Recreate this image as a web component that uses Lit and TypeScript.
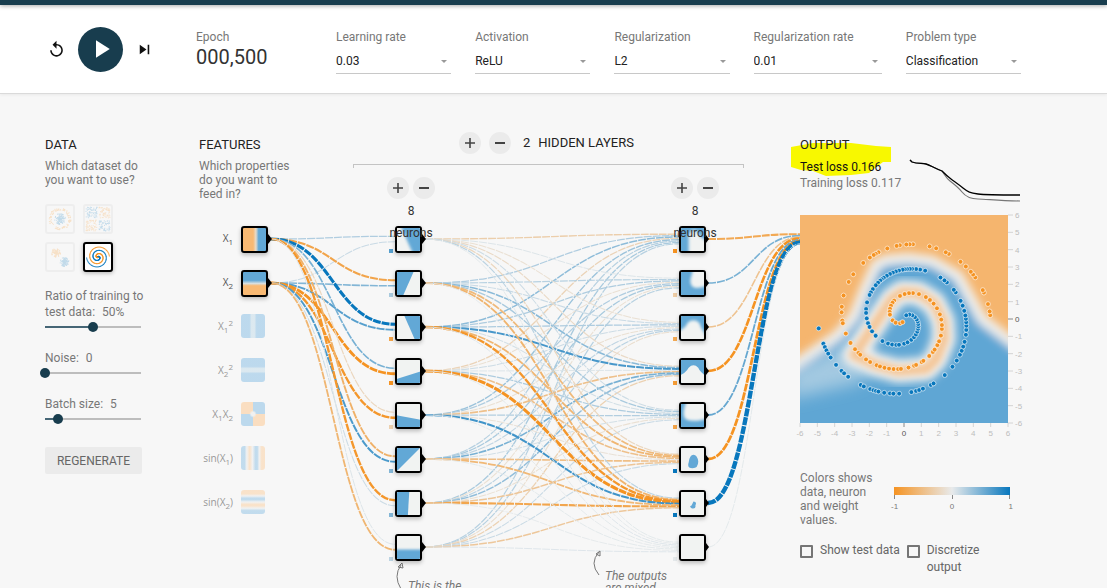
import { LitElement, html, svg, css } from "lit";
import { customElement, state } from "lit/decorators.js";
import { classMap } from "lit/directives/class-map.js";
import { styleMap } from "lit/directives/style-map.js";

const ORANGE = [245, 147, 34];
const NEUTRAL = [232, 234, 235];
const BLUE = [8, 119, 189];

function weightColor(w: number): string {
  const end = w < 0 ? ORANGE : BLUE;
  const k = Math.min(1, Math.abs(w));
  return `rgb(${NEUTRAL.map((n, i) => Math.round(n + (end[i] - n) * k)).join(",")})`;
}

/* Weights are listed per target neuron, one entry for each source. */
const INPUT_WEIGHTS = [
  [0.25, 0.14], [-0.8, 0.45], [1.4, 0.65], [0.5, -1.2],
  [-0.22, -0.95], [-0.65, 0.7], [-0.95, 0.12], [0.06, -0.6],
];
const HIDDEN_WEIGHTS = [
  [-0.32, 0.25, 0.4, -0.26, 0.34, 0.22, 0.28, 0.22],
  [0.06, 0.22, 0.26, -0.12, 0.25, 0.28, -0.12, 0.22],
  [-0.12, 0.14, 0.26, 0.12, -0.12, 0.18, 0.2, -0.14],
  [-0.18, 0.42, 0.72, 0.06, -0.48, 0.5, 0.38, -0.28],
  [0.12, 0.28, 0.1, 0.26, 0.24, 0.1, -0.12, 0.14],
  [-0.22, -0.55, -0.6, -0.48, -0.1, -0.5, -0.42, 0.14],
  [0.2, -0.62, -0.95, -1.4, 0.75, -0.58, -0.78, -0.4],
  [0.03, 0.02, 0.05, 0.03, 0.02, 0.03, 0.02, 0.05],
];
const OUTPUT_WEIGHTS = [[-0.75, 0.5, -0.45, -1.1, 0.58, -1.2, 2.2, 0.03]];
const BIASES = [
  [0.65, 0.28, -0.8, -1, -0.3, 0.45, 0.45, 0.2],
  [-1, -0.35, -0.75, -0.9, -0.8, 1, 1, 0.02],
];

const ROW = 44;
const NODE = 27;
const TOP = 89;
const rowY = (i: number) => TOP + 13 + i * ROW;

const LIGHT = "#f1f3f2";
const FILL = "#62a8d6";

type Texture = { bg: string; fg: string; d: string; blur: number };
const onLight = (d: string, blur = 0.5): Texture => ({ bg: LIGHT, fg: FILL, d, blur });
const onBlue = (d: string, blur = 1): Texture => ({ bg: FILL, fg: LIGHT, d, blur });

const TEXTURES: Texture[][] = [
  [
    onLight("M3-4H30V30H18Z", 1.8),
    onLight("M-4-4H19L4 30H-4Z"),
    onLight("M6-4H30V30H21Z", 0.8),
    onLight("M-4 21L28 11V30H-4Z"),
    onLight("M-4 11L28 17V30H-4Z"),
    onLight("M-4-4H28L-4 28Z"),
    onLight("M-4-4H13L11 30H-4Z"),
    onLight("M-4 14H30V30H-4Z", 1.2),
  ],
  [
    onBlue("M8 30L8 7Q12 0 16 3L21 10L30 15V30Z", 1.4),
    onBlue("M13-4H30V13Q20 18 13 16Q9 13 10 7Z", 1.6),
    onBlue("M-4 16Q4 14 7 7Q13 2 19 7Q21 13 24 17L30 30H-4Z", 1.5),
    onBlue("M-4 17Q5 14 8 8Q13 3 18 8Q20 13 28 18V30H-4Z", 0.7),
    onBlue("M6-4Q0 12 5 16Q15 20 30 14V-4Z", 1.6),
    onLight("M13 7Q17 7 18 14Q18 21 12 21Q6 21 8 15Q9 7 13 7Z", 0.8),
    onLight("M13 10Q17 10 15 14Q16 18 11 17Q8 15 11 14Z", 0.6),
    onLight(""),
  ],
];

const FEATURES = [
  { label: html`X<sub>1</sub>`, art: "f-x1", on: true },
  { label: html`X<sub>2</sub>`, art: "f-x2", on: true },
  { label: html`X<sub>1</sub><sup>2</sup>`, art: "f-x1sq", on: false },
  { label: html`X<sub>2</sub><sup>2</sup>`, art: "f-x2sq", on: false },
  { label: html`X<sub>1</sub>X<sub>2</sub>`, art: "f-x1x2", on: false },
  { label: html`sin(X<sub>1</sub>)`, art: "f-sinx1", on: false },
  { label: html`sin(X<sub>2</sub>)`, art: "f-sinx2", on: false },
];

@customElement("neural-network")
export class NeuralNetwork extends LitElement {
  @state() width = 601;
  private observer?: ResizeObserver;

  static styles = css`
    :host { display: block; position: relative; min-height: 460px; }
    .head { display: flex; }
    .features { width: 154px; }
    h2 { margin: 0; font-size: 13px; line-height: 16px; font-weight: 400; color: #222; }
    p { margin: 6px 56px 0 0; font-size: 12px; line-height: 14px; color: #777; }
    .layers { flex: 1; margin-right: 56px; }
    .title { display: flex; align-items: center; justify-content: center; gap: 8px; height: 22px; margin-top: -5px; padding-right: 4px; }
    .title .count { padding-left: 4px; font-size: 13px; color: #222; }
    .bracket { height: 3px; margin-top: 10px; border: 1px solid #c4c4c4; border-bottom: 0; }
    button.round { width: 22px; height: 22px; padding: 0; border: 0; border-radius: 50%; background: #ebebeb; display: grid; place-items: center; }
    .round svg { width: 12px; height: 12px; }
    .links { position: absolute; left: 0; top: 0; width: 100%; height: 100%; overflow: hidden; pointer-events: none; }
    .node { position: absolute; box-sizing: border-box; width: 27px; height: 27px; border: 2px solid #000; border-radius: 3px; overflow: hidden; box-shadow: 0 2px 4px rgba(0, 0, 0, 0.25); }
    .node svg { display: block; width: 100%; height: 100%; }
    .off { width: 24px; height: 24px; border: 0; opacity: 0.42; box-shadow: none; }
    .label { position: absolute; width: 60px; left: -26px; height: 16px; text-align: right; font: 10px/16px "Open Sans", sans-serif; color: #555; }
    .label.dim { color: #999; }
    .label sub, .label sup { font-size: 8px; line-height: 0; }
    .f-x1 { background: linear-gradient(90deg, #f8b973 44%, #e8dccb 56%, #62a8d6 68%); }
    .f-x2 { background: linear-gradient(#62a8d6 36%, #d7dfe0 50%, #f8b973 60%); }
    .f-x1sq { background: linear-gradient(90deg, #6cb0e0 35%, #b6d5e6 44%, #b6d5e6 56%, #6cb0e0 65%); }
    .f-x2sq { background: linear-gradient(#6cb0e0 35%, #b6d5e6 44%, #b6d5e6 56%, #6cb0e0 65%); }
    .f-x1x2 { background: radial-gradient(circle, #e8eaeb 10%, transparent 22%), conic-gradient(#6cb0e0 25%, #ffbe78 0 50%, #6cb0e0 0 75%, #ffbe78 0); }
    .f-sinx1 { background: linear-gradient(90deg, #78b6e0 15%, #e8eaeb 24%, #fcc68c 36%, #e8eaeb 48%, #78b6e0 60% 68%, #e8eaeb 76%, #fcc68c 86%); }
    .f-sinx2 { background: linear-gradient(#fcc68c 16%, #e8eaeb 25%, #78b6e0 34% 40%, #e8eaeb 50%, #fcc68c 60% 66%, #e8eaeb 76%, #78b6e0 86%); }
    .neurons { position: absolute; top: 40px; width: 52px; text-align: center; font-size: 12px; line-height: 22px; color: #333; }
    .pair { display: flex; justify-content: center; gap: 4px; margin-bottom: 1px; }
    .callout { position: absolute; width: 72px; font-size: 12px; line-height: 12px; font-style: italic; color: #777; }
  `;

  connectedCallback() {
    super.connectedCallback();
    this.observer = new ResizeObserver((entries) => {
      this.width = Math.round(entries[0].contentRect.width);
    });
    this.observer.observe(this);
  }

  disconnectedCallback() {
    this.observer?.disconnect();
    super.disconnectedCallback();
  }

  private links(weights: number[][], from: number, to: number) {
    return weights.map((sources, t) =>
      sources.map((w, s) => {
        const y0 = rowY(s);
        const y1 = rowY(t) + ((s - (sources.length - 1) / 2) / sources.length) * 11;
        const mid = (from + to) / 2;
        return svg`<path d="M${from} ${y0}C${mid} ${y0} ${mid} ${y1} ${to} ${y1}" fill="none"
          stroke=${weightColor(w)} stroke-width=${0.85 + Math.abs(w) * 1.6} stroke-dasharray="8 1"></path>`;
      }),
    );
  }

  private round(kind: "plus" | "minus", label: string) {
    return html`<button class="round" aria-label=${label}>
      <svg viewBox="0 0 12 12"><path d=${kind === "plus" ? "M1 6H11M6 1V11" : "M1 6H11"} stroke="#444" stroke-width=${kind === "plus" ? 1.6 : 2} fill="none"></path></svg>
    </button>`;
  }

  private node(t: Texture, left: number, row: number) {
    return html`<div class="node" style=${styleMap({ left: `${left}px`, top: `${TOP + row * ROW}px` })}>
      <svg viewBox="0 0 24 24">
        <rect width="24" height="24" fill=${t.bg}></rect>
        <path d=${t.d} fill=${t.fg} style=${styleMap({ filter: `blur(${t.blur}px)` })}></path>
      </svg>
    </div>`;
  }

  private arrow(x: number, row: number, size = 5) {
    const y = rowY(row);
    return svg`<path d="M${x} ${y - size}L${x + size - 1} ${y}L${x} ${y + size}Z" fill="#000"></path>`;
  }

  render() {
    const w = this.width;
    const featureX = 42;
    const secondX = w - 121;
    const firstX = Math.round(featureX + (secondX - featureX) * 0.352);
    const columns = [firstX, secondX];
    return html`
      <div class="head">
        <div class="features">
          <h2>FEATURES</h2>
          <p>Which properties do you want to feed in?</p>
        </div>
        <div class="layers">
          <div class="title">
            ${this.round("plus", "Add layer")}${this.round("minus", "Remove layer")}
            <span class="count">2</span>
            <h2>HIDDEN LAYERS</h2>
          </div>
          <div class="bracket"></div>
        </div>
      </div>

      <svg class="links">
        ${this.links(INPUT_WEIGHTS, featureX + NODE + 3, firstX)}
        ${this.links(HIDDEN_WEIGHTS, firstX + NODE + 3, secondX)}
        ${this.links(OUTPUT_WEIGHTS, secondX + NODE + 2, w)}
        ${[0, 1].map((r) => this.arrow(featureX + NODE, r))}
        ${columns.map((x, c) => BIASES[c].map((b, r) => svg`
          ${this.arrow(x + NODE, r, c ? 4 : 5)}
          <rect x=${x - 6} y=${TOP + 23 + r * ROW} width="4" height="4" fill=${weightColor(b)}></rect>`))}
        <path d=${`M${firstX + 6} 452Q${firstX - 2} 439 ${firstX + 6} 428M${firstX + 3} 430L${firstX + 7} 426L${firstX + 8} 431Z`} fill="none" stroke="#777"></path>
        <path d=${`M${secondX - 80} 438Q${secondX - 90} 426 ${secondX - 80} 415M${secondX - 83} 417L${secondX - 79} 414L${secondX - 79} 419Z`} fill="none" stroke="#777"></path>
      </svg>

      ${FEATURES.map((f, r) => html`
        <div class=${classMap({ label: true, dim: !f.on })} style=${styleMap({ top: `${TOP + 4 + r * ROW}px` })}>${f.label}</div>
        <div class=${classMap({ node: true, off: !f.on, [f.art]: true })} style=${styleMap({ left: `${featureX}px`, top: `${TOP + r * ROW}px` })}></div>
      `)}
      ${columns.map((x, c) => html`
        ${TEXTURES[c].map((t, r) => this.node(t, x, r))}
        <div class="neurons" style=${styleMap({ left: `${x - 10}px` })}>
          <div class="pair">${this.round("plus", "Add neuron")}${this.round("minus", "Remove neuron")}</div>
          8<br />neurons
        </div>
      `)}
      <div class="callout" style=${styleMap({ left: `${firstX + 13}px`, top: "443px" })}>This is the</div>
      <div class="callout" style=${styleMap({ left: `${secondX - 74}px`, top: "433px" })}>The outputs are mixed</div>
    `;
  }
}

const BLUE_POINTS = [
  0.99, 0.973, 0.969, 0.965, 0.961, 0.956, 0.946, 0.937, 0.933, 0.927, 0.91, 0.906, 0.898, 0.894, 0.891, 0.888, 0.881,
  0.874, 0.87, 0.863, 0.848, 0.842, 0.838, 0.833, 0.822, 0.818, 0.8, 0.785, 0.775, 0.766, 0.76, 0.754, 0.747, 0.737,
  0.73, 0.724, 0.719, 0.714, 0.709, 0.702, 0.694, 0.686, 0.671, 0.666, 0.65, 0.645, 0.637, 0.609, 0.6, 0.593, 0.586,
  0.582, 0.577, 0.573, 0.569, 0.562, 0.556, 0.55, 0.544, 0.537, 0.53, 0.525, 0.521, 0.515, 0.508, 0.498, 0.49, 0.484,
  0.467, 0.452, 0.443, 0.43, 0.418, 0.408, 0.395, 0.38, 0.356, 0.338, 0.325, 0.312, 0.303, 0.285, 0.272, 0.255, 0.24,
  0.226, 0.212, 0.198, 0.186, 0.174, 0.16, 0.146, 0.128, 0.105, 0.08, 0.05,
];
const ORANGE_POINTS = [
  0.996, 0.992, 0.984, 0.971, 0.968, 0.952, 0.948, 0.944, 0.936, 0.928, 0.912, 0.908, 0.896, 0.888, 0.868, 0.864, 0.86,
  0.852, 0.848, 0.836, 0.824, 0.82, 0.817, 0.811, 0.8, 0.78, 0.768, 0.748, 0.732, 0.724, 0.712, 0.708, 0.692, 0.676,
  0.664, 0.656, 0.652, 0.64, 0.632, 0.62, 0.614, 0.606, 0.598, 0.59, 0.582, 0.577, 0.563, 0.552, 0.548, 0.536, 0.532,
  0.517, 0.506, 0.5, 0.489, 0.48, 0.467, 0.452, 0.443, 0.43, 0.417, 0.4, 0.385, 0.371, 0.357, 0.335, 0.316, 0.303,
  0.288, 0.27, 0.241, 0.23, 0.215, 0.2, 0.185, 0.17, 0.132, 0.105, 0.067, 0.04,
];

function spiral(f: number, phase: number, scale: number, center: number) {
  const r = f * 5 * scale;
  const t = f * 1.75 * 2 * Math.PI + phase;
  return { x: center + r * Math.sin(t), y: center - r * Math.cos(t) };
}

@customElement("output-heatmap")
export class OutputHeatmap extends LitElement {
  static styles = css`
    :host { display: block; }
    svg { display: block; width: 100%; overflow: visible; }
    text { font: 8px "Liberation Sans", Arial, sans-serif; fill: #bdbdbd; }
    .zero { fill: #555; }
  `;

  private dots(points: number[], phase: number, color: string) {
    return points.map((f) => {
      const p = spiral(f, phase, 208 / 12, 104);
      return svg`<circle cx=${p.x} cy=${p.y} r="2.4" fill=${color} stroke="#fff" stroke-opacity="0.6"></circle>`;
    });
  }

  render() {
    const ticks = Array.from({ length: 13 }, (_, i) => i - 6);
    const at = (v: number) => 104 + (v * 208) / 12;
    const region = "M-20 161L14 137L38 120L54 101L65 74L76 50L86 45L108 43L132 46L158 61L172 86L182 104L230 141V230H-20Z";
    const ring = "M54 140L92 84L102 77L118 78L134 88L143 106L144 124L136 144L126 154L98 156L76 150Z";
    return html`<svg viewBox="0 0 220 222" role="img" aria-label="Network output">
      <defs>
        <clipPath id="plot"><rect width="208" height="208"></rect></clipPath>
        <filter id="b4" x="-20%" y="-20%" width="140%" height="140%"><feGaussianBlur stdDeviation="4"></feGaussianBlur></filter>
        <filter id="b3" x="-20%" y="-20%" width="140%" height="140%"><feGaussianBlur stdDeviation="3"></feGaussianBlur></filter>
        <filter id="b8" x="-50%" y="-50%" width="200%" height="200%"><feGaussianBlur stdDeviation="8"></feGaussianBlur></filter>
      </defs>
      <g clip-path="url(#plot)">
        <rect width="208" height="208" fill="#f5b56e"></rect>
        <g filter="url(#b4)">
          <path d=${region} fill="#5fa6d4" stroke="#eeeeec" stroke-width="11"></path>
        </g>
        <path d="M-10 156L44 130L72 156L58 168L-10 184Z" fill="#d2e1ea" opacity="0.6" filter="url(#b8)"></path>
        <path d=${ring} fill="none" stroke="#f0efed" stroke-width="24" stroke-linejoin="round" filter="url(#b4)"></path>
        <path d=${ring} fill="none" stroke="#f4c697" stroke-width="10" stroke-linejoin="round" filter="url(#b3)"></path>
        ${this.dots(ORANGE_POINTS, Math.PI, "#f59322")}
        ${this.dots(BLUE_POINTS, 0, "#0877bd")}
      </g>
      ${ticks.map((v) => svg`
        <path d=${`M208 ${at(-v)}H213M${at(v)} 208V212`} stroke=${v ? "#d4d4d4" : "#888"}></path>
        <text class=${v ? "" : "zero"} x="215" y=${at(-v) + 3}>${v}</text>
        <text class=${v ? "" : "zero"} x=${at(v)} y="221" text-anchor="middle">${v}</text>`)}
    </svg>`;
  }
}

/* Small repeatable generator so that the dataset thumbnails stay stable. */
function random(seed: number) {
  let s = seed;
  return () => {
    s = (s * 16807) % 2147483647;
    return s / 2147483647;
  };
}

type Dot = { x: number; y: number; blue: boolean };
function dataset(kind: string): Dot[] {
  const rnd = random(41);
  const dots: Dot[] = [];
  const polar = (r: number, cx: number, cy: number, blue: boolean) => {
    const a = rnd() * Math.PI * 2;
    dots.push({ x: cx + r * Math.cos(a), y: cy + r * Math.sin(a), blue });
  };
  for (let i = 0; i < 240; i++) {
    if (kind === "circle") polar(i % 2 ? rnd() * 5.5 : 8.5 + rnd() * 2.5, 13, 13, i % 2 === 1);
    if (kind === "gauss") polar(rnd() * 4.5, i % 2 ? 17.5 : 9, i % 2 ? 18 : 9, i % 2 === 1);
    if (kind === "xor") {
      const x = rnd() * 11, y = rnd() * 11, q = i % 4;
      dots.push({ x: x + (q % 2 ? 14 : 1), y: y + (q > 1 ? 14 : 1), blue: q === 0 || q === 3 });
    }
  }
  if (kind === "spiral") {
    for (let i = 0; i < 120; i++) {
      dots.push({ ...spiral(i / 120, Math.PI, 2.3, 13), blue: false });
      dots.push({ ...spiral(i / 120, 0, 2.3, 13), blue: true });
    }
  }
  return dots;
}

@customElement("app-root")
export class AppRoot extends LitElement {
  static styles = css`
    :host { display: block; height: 100vh; overflow: hidden; background: #f7f7f7; font: 12px/16px Roboto, Arial, sans-serif; color: #777; }
    * { box-sizing: border-box; }
    button, select, input { font: inherit; color: inherit; }
    .bar { height: 5px; background: #183d4e; box-shadow: 0 1px 4px rgba(0, 0, 0, 0.35); position: relative; }
    .top { display: flex; height: 89px; padding: 22px 86px 0 45px; background: #fff; border-bottom: 1px solid #dadada; box-shadow: 0 1px 3px rgba(0, 0, 0, 0.06); }
    .run { display: flex; align-items: center; gap: 10px; width: 151px; height: 44px; }
    .run button { display: grid; place-items: center; width: 23px; height: 22px; padding: 0; border: 0; background: none; color: #111; }
    .run button.play { width: 45px; height: 45px; border-radius: 50%; background: #183d4e; color: #fff; }
    .run svg { fill: currentColor; }
    .small { width: 19px; height: 19px; }
    .big { width: 30px; height: 30px; }
    .epoch { width: 140px; padding-top: 2px; }
    .number { margin-top: 1px; font-size: 20px; line-height: 22px; color: #333; }
    .fields { flex: 1; display: flex; gap: 24px; padding-top: 2px; }
    .field { flex: 115 1 0; min-width: 0; display: block; }
    .field.wide { flex-grow: 128; }
    select { display: block; width: 100%; height: 25px; margin-top: 4px; padding: 0; appearance: none; border: 0; border-bottom: 1px solid #c8c8c8; border-radius: 0; background: none; color: #222; }
    .pick { display: block; position: relative; }
    .pick svg { position: absolute; right: 4px; bottom: 11px; width: 6px; height: 3px; fill: #999; pointer-events: none; }
    main { display: grid; grid-template-columns: 98px minmax(0, 1fr) 220px; padding: 43px 87px 0 45px; }
    h2 { margin: 0; font-size: 13px; line-height: 16px; font-weight: 400; color: #222; }
    p { margin: 6px 0 0; line-height: 14px; }
    .sets { display: grid; grid-template-columns: 30px 30px; gap: 8px; margin: 17px 0 16px; }
    .set { width: 30px; height: 30px; padding: 0; border: 2px solid #eee; border-radius: 3px; background: #f7f7f7; }
    .set svg { display: block; width: 26px; height: 26px; opacity: 0.22; }
    .set.on { border-color: #000; background: #fff; box-shadow: 0 1px 4px rgba(0, 0, 0, 0.3); }
    .set.on svg { opacity: 1; }
    .slider { display: block; margin-bottom: 16px; white-space: nowrap; }
    .slider b { font-weight: 400; margin-left: 4px; }
    input[type="range"] { display: block; appearance: none; width: 106px; height: 14px; margin: 0 0 0 -5px;
      background: linear-gradient(90deg, #466676 var(--fill), #bdbdbd var(--fill)) no-repeat center / calc(100% - 10px) 2px; }
    input[type="range"]::-webkit-slider-thumb { appearance: none; width: 10px; height: 10px; border-radius: 50%; background: #183d4e; }
    .regen { width: 97px; height: 27px; margin-top: 5px; padding: 0; border: 0; border-radius: 2px; background: #ebebeb; color: #666; }
    neural-network { margin-left: 56px; }
    .output { position: relative; z-index: 0; }
    .mark { position: absolute; z-index: -1; left: -9px; top: 5px; width: 101px; height: 36px; fill: #f8f800; }
    .out-head { display: flex; justify-content: space-between; height: 78px; }
    .loss { white-space: nowrap; }
    .test { margin-top: 6px; color: #111; }
    .curve { width: 110px; height: 48px; margin-top: 22px; overflow: visible; fill: none; }
    .legend { display: flex; justify-content: space-between; align-items: flex-start; margin: 34px 0 15px; }
    .legend p { width: 80px; margin: 0; }
    .scale { width: 116px; margin: 16px 10px 0 0; }
    .gradient { height: 8px; background: linear-gradient(90deg, #f59322, #e8eaeb, #0877bd); }
    .ticks { height: 4px; border: solid #888; border-width: 0 1px; background: linear-gradient(#888, #888) no-repeat center / 1px 100%; }
    .nums { display: grid; grid-template-columns: 1fr 1fr 1fr; margin: 1px -3px 0; font: 8px/14px "Liberation Sans", Arial, sans-serif; }
    .nums :nth-child(2) { text-align: center; }
    .nums :nth-child(3) { text-align: right; }
    .checks { display: flex; gap: 7px; }
    .checks label { display: flex; gap: 7px; line-height: 17px; color: #666; }
    .checks input { flex: none; appearance: none; width: 13px; height: 13px; margin: 3px 0 0; border: 2px solid #757575; border-radius: 1px; }
    .nowrap { white-space: nowrap; }
    .narrow { width: 60px; }
  `;

  private field(label: string, value: string, wide = false) {
    return html`<label class=${classMap({ field: true, wide })}>${label}
      <span class="pick">
        <select><option>${value}</option></select>
        <svg viewBox="0 0 8 4"><path d="M0 0H8L4 4Z"></path></svg>
      </span>
    </label>`;
  }

  private slider(label: unknown, value: string, percent: number) {
    return html`<label class="slider">${label} <b>${value}</b><input type="range" min="0" max="100" .value=${String(percent)} style=${styleMap({ "--fill": `${percent}%` })} /></label>`;
  }

  render() {
    return html`
      <div class="bar"></div>
      <header class="top">
        <div class="run">
          <button aria-label="Reset"><svg class="small" viewBox="0 0 24 24"><path d="M12 5V1L7 6l5 5V7c3.31 0 6 2.69 6 6s-2.69 6-6 6-6-2.69-6-6H4c0 4.42 3.58 8 8 8s8-3.58 8-8-3.58-8-8-8z"></path></svg></button>
          <button class="play" aria-label="Run"><svg class="big" viewBox="0 0 24 24"><path d="M8 5v14l11-7z"></path></svg></button>
          <button aria-label="Step"><svg class="small" viewBox="0 0 24 24"><path d="M6 18l8.5-6L6 6v12zM16 6v12h2V6h-2z"></path></svg></button>
        </div>
        <div class="epoch">Epoch<div class="number">000,500</div></div>
        <div class="fields">
          ${this.field("Learning rate", "0.03")}
          ${this.field("Activation", "ReLU")}
          ${this.field("Regularization", "L2")}
          ${this.field("Regularization rate", "0.01", true)}
          ${this.field("Problem type", "Classification")}
        </div>
      </header>
      <main>
        <section>
          <h2>DATA</h2>
          <p>Which dataset do you want to use?</p>
          <div class="sets">
            ${["circle", "xor", "gauss", "spiral"].map((k) => html`
              <button class=${classMap({ set: true, on: k === "spiral" })} aria-label=${k}>
                <svg viewBox="0 0 26 26">${dataset(k).map((d) => svg`<rect x=${d.x - 0.5} y=${d.y - 0.5} width="1" height="1" fill=${d.blue ? "#0877bd" : "#f59322"}></rect>`)}</svg>
              </button>`)}
          </div>
          ${this.slider(html`Ratio of training to<br />test data:`, "50%", 50)}
          ${this.slider("Noise:", "0", 0)}
          ${this.slider("Batch size:", "5", 14)}
          <button class="regen">REGENERATE</button>
        </section>
        <neural-network></neural-network>
        <section class="output">
          <svg class="mark" viewBox="0 0 101 36"><path d="M0 5L22 1H60L85 4L100 5V20H92L84 26L78 31L60 33L35 34L22 29L10 28L0 25Z"></path></svg>
          <div class="out-head">
            <div class="loss">
              <h2>OUTPUT</h2>
              <div class="test">Test loss 0.166</div>
              <div>Training loss 0.117</div>
            </div>
            <svg class="curve" viewBox="0 0 110 48">
              <path d="M0 1L2 3C8 5 12 4 16 5S24 9 32 12C35 16 36 19 40 22S48 28 52 33S60 40 68 40S90 42 110 42" stroke="#777" stroke-width="1.2"></path>
              <path d="M0 1L2 3C8 5 12 4 16 5S24 9 32 12C35 15 37 17 41 20S48 25 53 29S60 34 68 35S90 36 110 36" stroke="#000" stroke-width="1.3"></path>
            </svg>
          </div>
          <output-heatmap></output-heatmap>
          <div class="legend">
            <p>Colors shows data, neuron and weight values.</p>
            <div class="scale">
              <div class="gradient"></div>
              <div class="ticks"></div>
              <div class="nums"><span>-1</span><span>0</span><span>1</span></div>
            </div>
          </div>
          <div class="checks">
            <label class="nowrap"><input type="checkbox" />Show test data</label>
            <label class="narrow"><input type="checkbox" />Discretize output</label>
          </div>
        </section>
      </main>
    `;
  }
}
